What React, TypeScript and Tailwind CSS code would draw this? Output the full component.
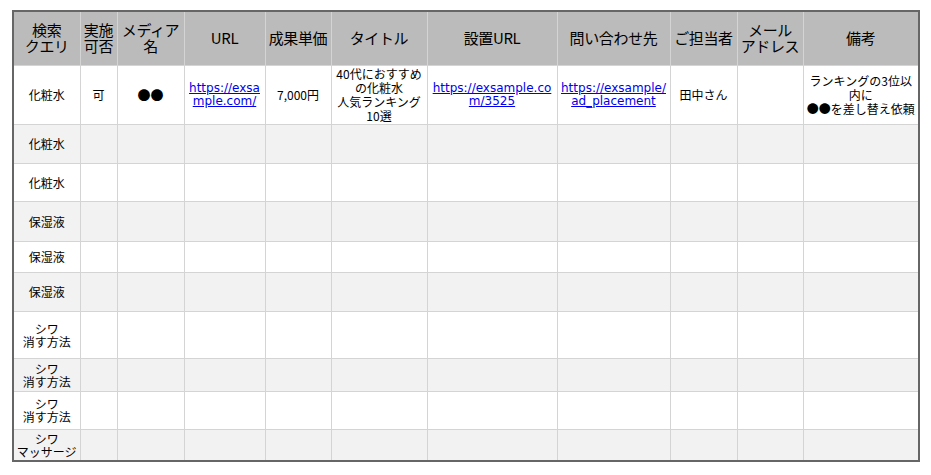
const cols = [67, 37, 67, 81, 66, 96, 130, 113, 67, 66, 116];
const heads = ["検索\nクエリ", "実施\n可否", "メディア\n名", "URL", "成果単価", "タイトル", "設置URL", "問い合わせ先", "ご担当者", "メール\nアドレス", "備考"];
const rows: [string, number][] = [
  ["化粧水", 39], ["化粧水", 38], ["保湿液", 40], ["保湿液", 31], ["保湿液", 39],
  ["シワ\n消す方法", 47], ["シワ\n消す方法", 33], ["シワ\n消す方法", 38], ["シワ\nマッサージ", 32],
];
const link = "text-[#0000ee] underline";
const mono = { fontFamily: '"DejaVu Sans", "Noto Sans CJK JP", sans-serif' };

export default function App() {
  return (
    <div className="w-[931px] h-[475px] bg-white pl-[12px] pt-[10px]" style={{ fontFamily: '"Noto Sans CJK JP", sans-serif' }}>
      <table className="border-collapse border-2 border-[#666] table-fixed text-[12px] leading-[13px] text-black" style={{ width: 906 }}>
        <colgroup>{cols.map((w, i) => <col key={i} style={{ width: w }} />)}</colgroup>
        <thead>
          <tr className="bg-[#bbbbbb] h-[54px]">
            {heads.map((h, i) => (
              <th key={i} className="border border-[#d4d4d4] font-normal text-[15px] leading-[16px] whitespace-pre-line text-center p-0 tracking-tight">{h}</th>
            ))}
          </tr>
        </thead>
        <tbody className="text-center">
          <tr className="h-[59px] bg-white">
            <td className="border border-[#d4d4d4]">化粧水</td>
            <td className="border border-[#d4d4d4]">可</td>
            <td className="border border-[#d4d4d4] text-[13px]">●●</td>
            <td className="border border-[#d4d4d4] break-all px-[2px]" style={mono}><span className={link}>https://exsample.com/</span></td>
            <td className="border border-[#d4d4d4]">7,000円</td>
            <td className="border border-[#d4d4d4] leading-[14px]">40代におすすめ<br />の化粧水<br />人気ランキング<br />10選</td>
            <td className="border border-[#d4d4d4] break-all px-[2px]" style={mono}><span className={link}>https://exsample.com/3525</span></td>
            <td className="border border-[#d4d4d4]" style={mono}><span className={link}>https://exsample/<br />ad_placement</span></td>
            <td className="border border-[#d4d4d4]">田中さん</td>
            <td className="border border-[#d4d4d4]"></td>
            <td className="border border-[#d4d4d4] leading-[14px]">ランキングの3位以<br />内に<br />●●を差し替え依頼</td>
          </tr>
          {rows.map(([q, h], r) => (
            <tr key={r} className={r % 2 === 0 ? "bg-[#f2f2f2]" : "bg-white"} style={{ height: h }}>
              <td className="border border-[#d4d4d4] whitespace-pre-line">{q}</td>
              {cols.slice(1).map((_, i) => <td key={i} className="border border-[#d4d4d4]"></td>)}
            </tr>
          ))}
        </tbody>
      </table>
    </div>
  );
}
